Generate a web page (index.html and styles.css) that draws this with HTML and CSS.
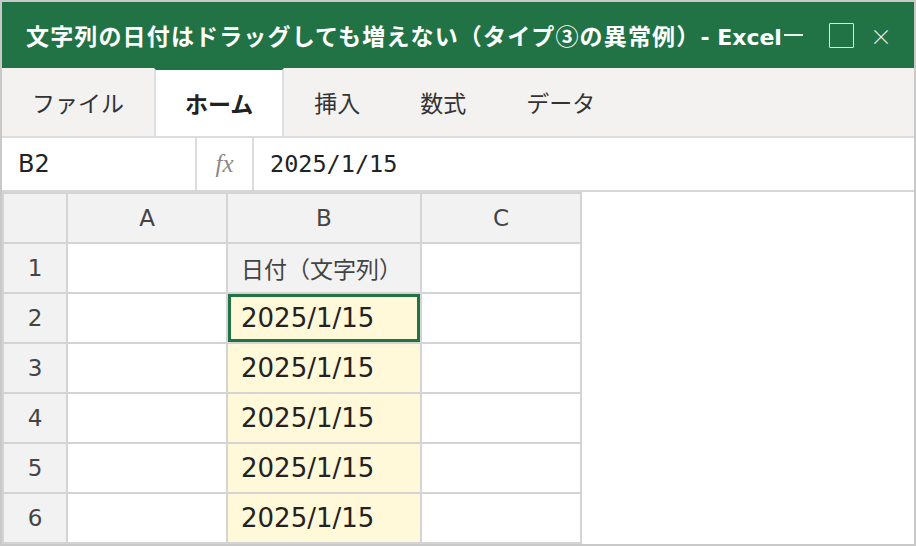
FILE: index.html
```html
<!DOCTYPE html>
<html lang="ja">
<head>
    <meta charset="UTF-8">
    <meta name="viewport" content="width=device-width, initial-scale=1.0">
    <title>文字列の日付はドラッグしても増えない - Excel</title>
    <link rel="stylesheet" href="styles.css">
</head>
<body>
    <div id="window">
        <div id="titlebar">
            <div class="title">文字列の日付はドラッグしても増えない（タイプ③の異常例）<span class="latin">- Excel</span></div>
            <div class="window-controls">
                <span class="ctl-min"></span>
                <span class="ctl-max"></span>
                <span class="ctl-close">×</span>
            </div>
        </div>
        <div id="ribbon">
            <div class="tab">ファイル</div>
            <div class="tab active">ホーム</div>
            <div class="tab">挿入</div>
            <div class="tab">数式</div>
            <div class="tab">データ</div>
        </div>
        <div id="formula-bar">
            <div class="name-box">B2</div>
            <div class="fx">fx</div>
            <div class="formula">2025/1/15</div>
        </div>
        <div id="sheet">
            <table class="grid">
                <tr>
                    <th class="corner"></th>
                    <th class="col-a">A</th>
                    <th class="col-b">B</th>
                    <th class="col-c">C</th>
                </tr>
                <tr>
                    <th>1</th>
                    <td></td>
                    <td class="label">日付（文字列）</td>
                    <td></td>
                </tr>
                <tr>
                    <th>2</th>
                    <td></td>
                    <td class="text-date selected">2025/1/15</td>
                    <td></td>
                </tr>
                <tr>
                    <th>3</th>
                    <td></td>
                    <td class="text-date">2025/1/15</td>
                    <td></td>
                </tr>
                <tr>
                    <th>4</th>
                    <td></td>
                    <td class="text-date">2025/1/15</td>
                    <td></td>
                </tr>
                <tr>
                    <th>5</th>
                    <td></td>
                    <td class="text-date">2025/1/15</td>
                    <td></td>
                </tr>
                <tr>
                    <th>6</th>
                    <td></td>
                    <td class="text-date">2025/1/15</td>
                    <td></td>
                </tr>
            </table>
        </div>
    </div>
</body>
</html>
```

FILE: styles.css
```css
html, body {
    margin: 0;
    padding: 0;
    background: #ffffff;
}

body {
    font-family: "Noto Sans CJK JP", "Noto Sans", sans-serif;
    color: #333;
}

#window {
    width: 916px;
    height: 546px;
    box-sizing: border-box;
    border: 2px solid #c9c9c9;
    display: flex;
    flex-direction: column;
    overflow: hidden;
    background: #fff;
}

/* title bar */
#titlebar {
    height: 66px;
    flex: none;
    background: #217346;
    color: #fff;
    display: flex;
    align-items: center;
    padding-left: 24px;
    white-space: nowrap;
}

.title {
    font-size: 23px;
    font-weight: bold;
    letter-spacing: 1.15px;
}

.title .latin {
    font-family: "DejaVu Sans", sans-serif;
    font-size: 22px;
    letter-spacing: 0;
}

.window-controls {
    display: flex;
    align-items: center;
    padding-left: 2px;
}

.ctl-min {
    width: 19px;
    height: 2px;
    background: rgba(255, 255, 255, 0.9);
    margin-right: 26px;
}

.ctl-max {
    width: 23px;
    height: 23px;
    border: 1px solid rgba(255, 255, 255, 0.85);
    border-radius: 1px;
}

.ctl-close {
    font-size: 22px;
    font-weight: 300;
    margin-left: 16px;
    opacity: 0.9;
}

/* ribbon tabs */
#ribbon {
    height: 68px;
    flex: none;
    background: #f3f2f1;
    border-bottom: 2px solid #dcdcdc;
    display: flex;
}

.tab {
    padding: 0 30px;
    font-size: 23px;
    color: #333;
    display: flex;
    align-items: center;
}

.tab.active {
    background: #fff;
    color: #222;
    font-weight: bold;
    border-left: 2px solid #dedede;
    border-right: 2px solid #dedede;
    border-top: 2px solid #217346;
    padding: 0 29px;
}

/* formula bar */
#formula-bar {
    height: 52px;
    flex: none;
    display: flex;
    border-bottom: 2px solid #d6d6d6;
}

.name-box {
    width: 177px;
    padding-left: 16px;
    border-right: 2px solid #dcdcdc;
    font-family: "DejaVu Sans", sans-serif;
    font-size: 24px;
    color: #222;
    display: flex;
    align-items: center;
}

.fx {
    width: 55px;
    border-right: 2px solid #dcdcdc;
    font-family: "Liberation Serif", serif;
    font-style: italic;
    font-size: 25px;
    color: #8a8a8a;
    display: flex;
    align-items: center;
    justify-content: center;
}

.formula {
    padding-left: 16px;
    font-family: "DejaVu Sans Mono", "Liberation Mono", monospace;
    font-size: 23.5px;
    color: #222;
    display: flex;
    align-items: center;
}

/* sheet grid */
#sheet {
    flex: 1;
    display: flex;
    align-items: flex-start;
}

.grid {
    background: #d4d4d4;
    border-spacing: 2px;
    font-family: "DejaVu Sans", "Noto Sans CJK JP", sans-serif;
    font-size: 23px;
}

.grid th,
.grid td {
    height: 48px;
    padding: 0;
    box-sizing: border-box;
}

.grid th {
    background: #f2f2f2;
    font-weight: normal;
    color: #444;
    width: 62px;
}

.grid .col-a { width: 158px; }
.grid .col-b { width: 192px; }
.grid .col-c { width: 158px; }

.grid td {
    background: #fff;
}

.grid td.label {
    background: #f2f2f2;
    padding-left: 13px;
    font-family: "Noto Sans CJK JP", sans-serif;
    color: #444;
}

.grid td.text-date {
    background: #fff8d9;
    padding-left: 13px;
    font-size: 26px;
    color: #222;
}

.grid td.selected {
    outline: 3px solid #217346;
    outline-offset: -3px;
}
```
